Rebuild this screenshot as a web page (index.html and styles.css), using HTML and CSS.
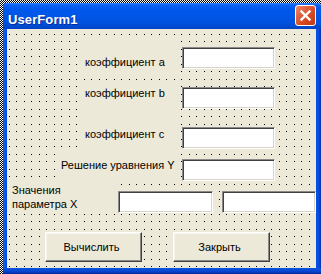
FILE: index.html
```html
<!DOCTYPE html>
<html lang="ru">
<head>
<meta charset="utf-8">
<title>UserForm1</title>
<link rel="stylesheet" href="styles.css">
</head>
<body>
<div class="screen">
  <div class="window">
    <div class="titlebar">
      <span class="title">UserForm1</span>
      <span class="close">
        <svg width="21" height="21" viewBox="0 0 21 21">
          <path d="M6.5 6.5L14.5 14.5M14.5 6.5L6.5 14.5" stroke="#fff" stroke-width="2.4" stroke-linecap="square" fill="none"/>
        </svg>
      </span>
    </div>
    <div class="client">
      <div class="row row-a">
        <div class="label label-abc lab-a">коэффициент а</div>
        <div class="textbox tb-main tb-a"></div>
      </div>
      <div class="row row-b">
        <div class="label label-abc lab-b">коэффициент b</div>
        <div class="textbox tb-main tb-b"></div>
      </div>
      <div class="row row-c">
        <div class="label label-abc lab-c">коэффициент с</div>
        <div class="textbox tb-main tb-c"></div>
      </div>
      <div class="row row-d">
        <div class="label lab-d">Решение уравнения Y</div>
        <div class="textbox tb-main tb-d"></div>
      </div>
      <div class="row row-e">
        <div class="label lab-e">Значения<br>параметра X</div>
        <div class="textbox tb-x1"></div>
        <div class="textbox tb-x2"></div>
      </div>
      <div class="row row-f">
        <div class="button btn-calc">Вычислить</div>
        <div class="button btn-close">Закрыть</div>
      </div>
    </div>
  </div>
</div>
</body>
</html>
```

FILE: styles.css
```css
html, body {
  margin: 0;
  padding: 0;
  background: #ffffff;
}

.screen {
  width: 321px;
  height: 274px;
  overflow: hidden;
  box-sizing: border-box;
  padding: 3px 0 0 3px;
  background: repeating-conic-gradient(#000 0 25%, #fff 0 50%) 0 0 / 2px 2px;
}

.window {
  width: 318px;
  height: 271px;
  display: flex;
  flex-direction: column;
  background: linear-gradient(90deg, #0a3fd0 0, #1a6af5 1px, #0858ea 2px, #0650e0 3px, #0650e0 315px, #0a44d2 316px, #0530b8 318px);
  border-radius: 4px 4px 0 0;
  font-family: "Liberation Sans", Arial, sans-serif;
}

.titlebar {
  height: 26px;
  flex: none;
  display: flex;
  justify-content: space-between;
  align-items: flex-start;
  background: linear-gradient(180deg, #3c8ffb 0, #1a6cf3 1px, #0a5ff0 3px, #0058ea 7px, #0055e5 14px, #0051dd 20px, #0049cf 24px, #0040c0 26px);
  border-radius: 4px 4px 0 0;
}

.title {
  color: #ffffff;
  font-weight: bold;
  font-size: 13px;
  line-height: 15px;
  padding: 9px 0 0 5px;
  text-shadow: 1px 1px 0 #0a2a9a;
  letter-spacing: 0.1px;
}

.close {
  width: 21px;
  height: 21px;
  box-sizing: border-box;
  margin: 2px 5px 0 0;
  border: 1px solid #ffffff;
  border-radius: 3px;
  background: linear-gradient(135deg, #f08a6a 0, #e0603e 35%, #d4461f 65%, #c23a18 100%);
  display: flex;
  align-items: center;
  justify-content: center;
}

.close svg {
  display: block;
  margin: -1px;
}

.client {
  width: 309px;
  height: 239px;
  margin: 0 5px 0 4px;
  flex: none;
  background-color: #000;
  background-image:
    linear-gradient(90deg, transparent 0 1px, #ece9d8 1px 7px, transparent 7px 8px, #ece9d8 8px 15px),
    linear-gradient(180deg, transparent 0 1px, #ece9d8 1px 7px, transparent 7px 8px, #ece9d8 8px 15px);
  background-size: 15px 15px, 15px 15px;
  background-position: 2px 0, 0 5px;
  overflow: hidden;
}

.window::after {
  content: "";
  display: block;
  height: 6px;
  background: linear-gradient(180deg, #0a52df 0, #0748d4 3px, #0436b8 5px, #021e8a 6px);
}

.row {
  display: flex;
  align-items: flex-start;
}

.label {
  box-sizing: border-box;
  background: #ece9d8;
  color: #000;
  font-size: 11px;
  line-height: 13px;
  white-space: nowrap;
}

.label-abc {
  margin-left: 72px;
  width: 102px;
  padding-left: 6px;
}

.row-a { margin-top: 9px; height: 35px; }
.lab-a { height: 35px; padding-top: 18px; }
.tb-a { margin-top: 9px; }

.row-b { margin-top: 7px; height: 38px; }
.lab-b { height: 38px; padding-top: 7px; }
.tb-b { margin-top: 7px; }

.row-c { height: 30px; }
.lab-c { height: 30px; padding-top: 10px; }
.tb-c { margin-top: 9px; }

.row-d { margin-top: 5px; height: 30px; }
.lab-d {
  margin-left: 50px;
  width: 124px;
  height: 30px;
  padding: 6px 0 0 4px;
}
.tb-d { margin-top: 6px; }

.row-e { height: 31px; }
.lab-e {
  margin-left: 1px;
  width: 110px;
  height: 31px;
  padding: 1px 0 0 4px;
  line-height: 13.5px;
}

.textbox {
  box-sizing: border-box;
  height: 22px;
  background: #ffffff;
  border: 1px solid;
  border-color: #8a8a8a #ffffff #ffffff #8a8a8a;
  box-shadow: inset 1px 1px 0 #404040, inset -1px -1px 0 #d8d4c8;
}

.tb-main {
  margin-left: 1px;
  width: 93px;
}

.tb-x1 {
  margin-top: 8px;
  width: 95px;
}

.tb-x2 {
  margin-top: 8px;
  margin-left: 9px;
  width: 94px;
}

.row-f { margin-top: 18px; }

.button {
  box-sizing: border-box;
  width: 97px;
  height: 30px;
  background: #ece9d8;
  border: 1px solid;
  border-color: #ffffff #404040 #404040 #ffffff;
  box-shadow: inset -1px -1px 0 #8a8a8a, inset 1px 1px 0 #f6f4ec;
  font-size: 11px;
  line-height: 13px;
  color: #000;
  display: flex;
  align-items: center;
  justify-content: center;
  padding: 0 4px 0 0;
}

.btn-calc { margin-left: 38px; }
.btn-close { margin-left: 31px; }
```
